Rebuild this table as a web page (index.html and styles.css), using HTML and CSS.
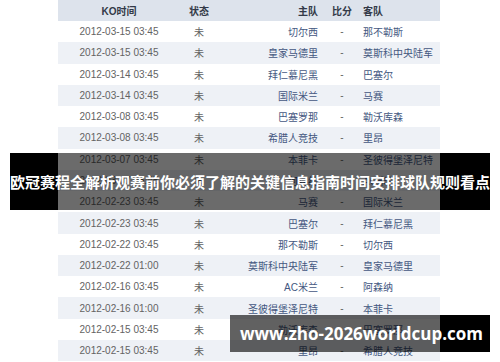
FILE: index.html
```html
<!DOCTYPE html>
<html lang="zh">
<head>
<meta charset="utf-8">
<title>欧冠赛程</title>
<link rel="stylesheet" href="styles.css">
</head>
<body>
<div class="page">
  <div class="table">
    <div class="row head">
      <div class="c-time">KO时间</div><div class="c-st">状态</div><div class="c-home">主队</div><div class="c-sc">比分</div><div class="c-away">客队</div>
    </div>
    <div class="row"><div class="c-time">2012-03-15 03:45</div><div class="c-st">未</div><div class="c-home">切尔西</div><div class="c-sc">-</div><div class="c-away">那不勒斯</div></div>
    <div class="row alt"><div class="c-time">2012-03-15 03:45</div><div class="c-st">未</div><div class="c-home">皇家马德里</div><div class="c-sc">-</div><div class="c-away">莫斯科中央陆军</div></div>
    <div class="row"><div class="c-time">2012-03-14 03:45</div><div class="c-st">未</div><div class="c-home">拜仁慕尼黑</div><div class="c-sc">-</div><div class="c-away">巴塞尔</div></div>
    <div class="row alt"><div class="c-time">2012-03-14 03:45</div><div class="c-st">未</div><div class="c-home">国际米兰</div><div class="c-sc">-</div><div class="c-away">马赛</div></div>
    <div class="row"><div class="c-time">2012-03-08 03:45</div><div class="c-st">未</div><div class="c-home">巴塞罗那</div><div class="c-sc">-</div><div class="c-away">勒沃库森</div></div>
    <div class="row alt"><div class="c-time">2012-03-08 03:45</div><div class="c-st">未</div><div class="c-home">希腊人竞技</div><div class="c-sc">-</div><div class="c-away">里昂</div></div>
    <div class="row"><div class="c-time">2012-03-07 03:45</div><div class="c-st">未</div><div class="c-home">本菲卡</div><div class="c-sc">-</div><div class="c-away">圣彼得堡泽尼特</div></div>
    <div class="row alt"><div class="c-time">2012-03-07 03:45</div><div class="c-st">未</div><div class="c-home">阿森纳</div><div class="c-sc">-</div><div class="c-away">AC米兰</div></div>
    <div class="row"><div class="c-time">2012-02-23 03:45</div><div class="c-st">未</div><div class="c-home">马赛</div><div class="c-sc">-</div><div class="c-away">国际米兰</div></div>
    <div class="row alt"><div class="c-time">2012-02-23 03:45</div><div class="c-st">未</div><div class="c-home">巴塞尔</div><div class="c-sc">-</div><div class="c-away">拜仁慕尼黑</div></div>
    <div class="row"><div class="c-time">2012-02-22 03:45</div><div class="c-st">未</div><div class="c-home">那不勒斯</div><div class="c-sc">-</div><div class="c-away">切尔西</div></div>
    <div class="row alt"><div class="c-time">2012-02-22 01:00</div><div class="c-st">未</div><div class="c-home">莫斯科中央陆军</div><div class="c-sc">-</div><div class="c-away">皇家马德里</div></div>
    <div class="row"><div class="c-time">2012-02-16 03:45</div><div class="c-st">未</div><div class="c-home">AC米兰</div><div class="c-sc">-</div><div class="c-away">阿森纳</div></div>
    <div class="row alt"><div class="c-time">2012-02-16 01:00</div><div class="c-st">未</div><div class="c-home">圣彼得堡泽尼特</div><div class="c-sc">-</div><div class="c-away">本菲卡</div></div>
    <div class="row"><div class="c-time">2012-02-15 03:45</div><div class="c-st">未</div><div class="c-home">勒沃库森</div><div class="c-sc">-</div><div class="c-away">巴塞罗那</div></div>
    <div class="row alt"><div class="c-time">2012-02-15 03:45</div><div class="c-st">未</div><div class="c-home">里昂</div><div class="c-sc">-</div><div class="c-away">希腊人竞技</div></div>
  </div>
  <div class="band"><h1 class="title">欧冠赛程全解析观赛前你必须了解的关键信息指南时间安排球队规则看点</h1></div>
  <div class="mark">www.zho-2026worldcup.com</div>
</div>
</body>
</html>
```

FILE: styles.css
```css
html, body {
  margin: 0;
  padding: 0;
  background: #ffffff;
}
.page {
  position: relative;
  width: 500px;
  height: 362px;
  overflow: hidden;
  font-family: "Liberation Sans", "Noto Sans CJK SC", sans-serif;
}
.table {
  margin-left: 58px;
  width: 382px;
  display: flex;
  flex-direction: column;
}
.row {
  display: grid;
  grid-template-columns: 122px 38px 104px 40px 78px;
  align-items: center;
  height: 21.27px;
  font-size: 10px;
  color: #636363;
  background: #ffffff;
}
.row.alt {
  background: #eef1f6;
}
.row.head {
  height: 21px;
  background: #dde3ec;
  color: #333a48;
  font-weight: bold;
  font-size: 10px;
}
.c-time {
  text-align: center;
}
.c-st {
  text-align: center;
}
.c-home {
  text-align: right;
  padding-right: 4px;
  white-space: nowrap;
  color: #44577f;
}
.c-sc {
  text-align: center;
}
.c-away {
  padding-left: 1px;
  white-space: nowrap;
  color: #44577f;
}
.head .c-home, .head .c-away {
  color: #333a48;
}
.band {
  position: absolute;
  left: 10px;
  top: 153px;
  width: 480px;
  height: 57px;
  background: linear-gradient(to right, #000 0, #000 48px, rgba(0,0,0,0.58) 48px, rgba(0,0,0,0.58) 430px, #000 430px, #000 480px);
  display: flex;
  align-items: center;
  justify-content: center;
}
.title {
  margin: 0;
  font-family: "Noto Sans CJK SC", sans-serif;
  font-size: 15px;
  font-weight: bold;
  color: #ffffff;
  white-space: nowrap;
  line-height: 1;
}
.mark {
  position: absolute;
  left: 230px;
  top: 315px;
  width: 260px;
  height: 37px;
  box-sizing: border-box;
  padding-left: 10px;
  background: linear-gradient(to right, rgba(0,0,0,0.62) 0, rgba(0,0,0,0.62) 210px, #000 210px, #000 260px);
  display: flex;
  align-items: center;
  font-family: "Open Sans", "Liberation Sans", sans-serif;
  font-weight: bold;
  font-size: 17px;
  color: #ffffff;
  white-space: nowrap;
}
```
